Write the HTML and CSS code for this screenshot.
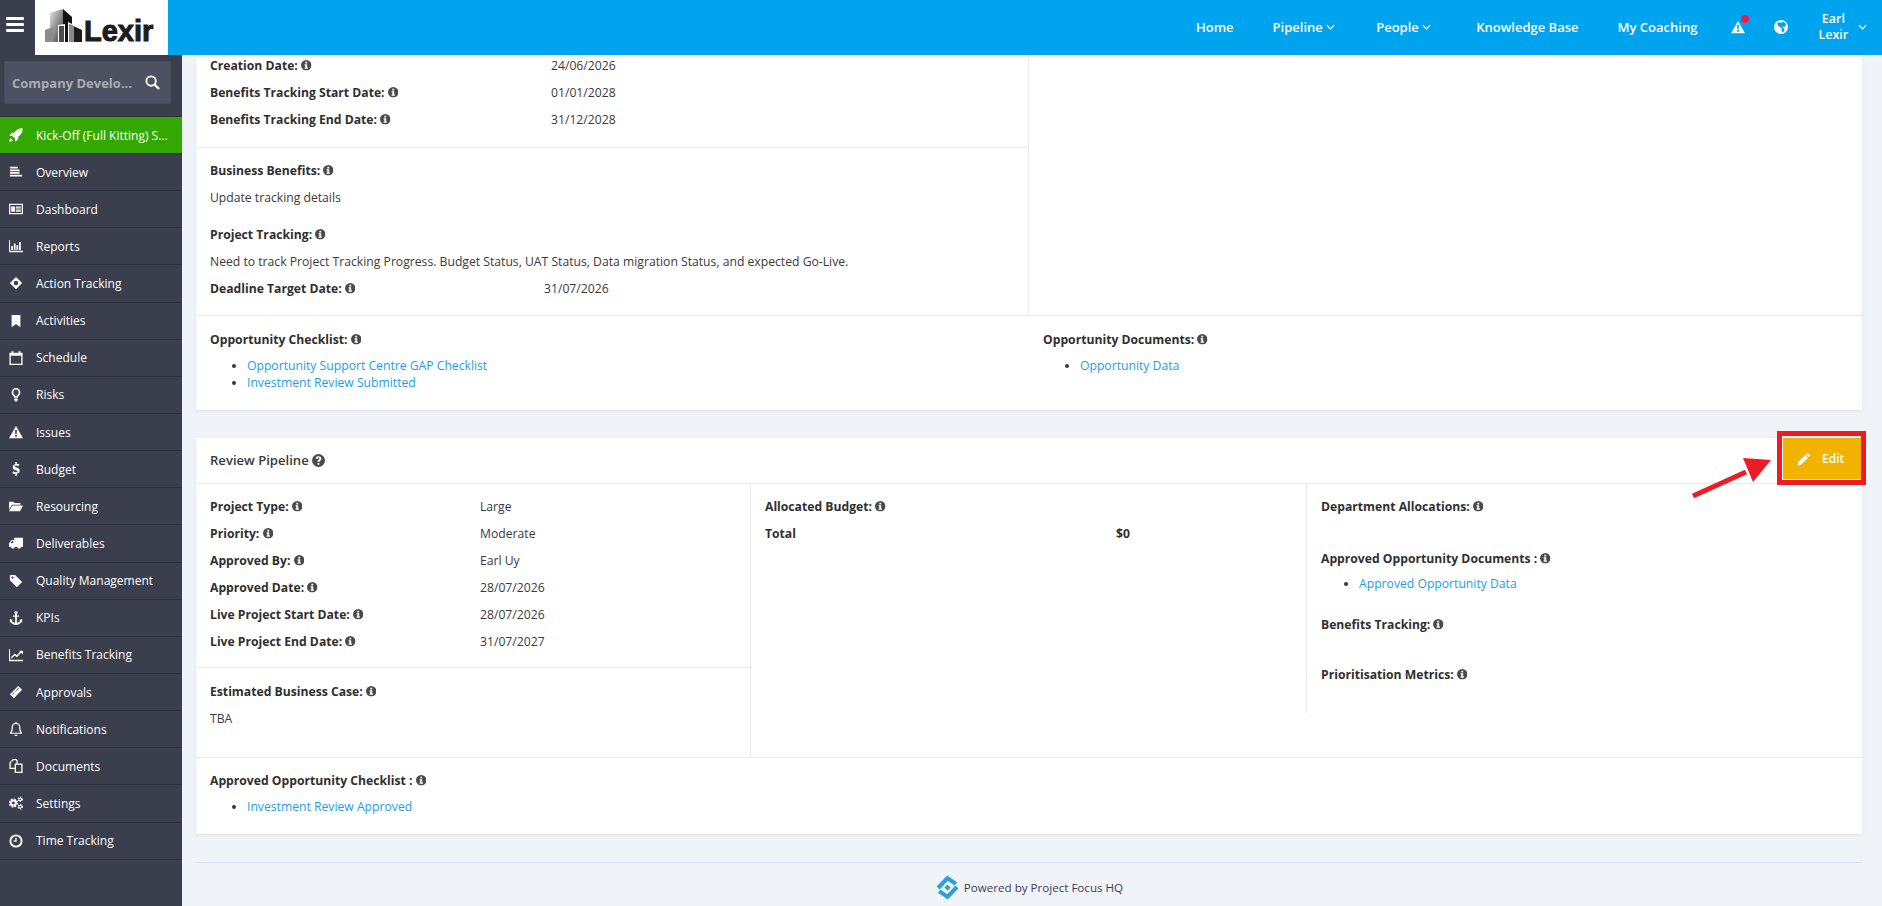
FILE: index.html
```html
<!DOCTYPE html>
<html lang="en">
<head>
  <meta charset="UTF-8" />
  <meta name="viewport" content="width=device-width, initial-scale=1.0" />
  <title>Review Pipeline - Lexir</title>
  <link rel="stylesheet" href="styles.css">
</head>
<body>

  <!-- Shared icons -->
  <svg class="sprite" xmlns="http://www.w3.org/2000/svg">
    <defs>
      <linearGradient id="tower" x1="0" y1="0" x2="1" y2="1"><stop offset="0" stop-color="#e4e4e4"/><stop offset="1" stop-color="#3c3c3c"/></linearGradient>
    </defs>
    <symbol id="i-info" viewBox="0 0 16 16"><path fill-rule="evenodd" d="M8 0a8 8 0 1 1 0 16A8 8 0 0 1 8 0zM6.600 2.600v2.600h2.800V2.600zM5.400 6.600v1.700h1.200v3.200H5.400v1.800h5.200v-1.800H9.400V6.600z"/></symbol>
    <symbol id="i-help" viewBox="0 0 16 16"><path fill-rule="evenodd" d="M8 0a8 8 0 1 1 0 16A8 8 0 0 1 8 0zM6.900 11v2.200h2.200V11zM8 2.800c-1.900 0-3.200 1-3.500 2.800l2.100.5c.1-.8.600-1.300 1.300-1.300.7 0 1.200.4 1.200 1 0 .5-.3.800-1 1.300-.9.600-1.200 1.200-1.200 2.200v.4h2.200c0-.6.100-.9.800-1.400 1-.7 1.500-1.400 1.500-2.600 0-2-1.600-3-3.400-2.900z"/></symbol>
    <symbol id="i-chevron" viewBox="0 0 10 6"><path d="M1 1l4 4 4-4" fill="none" stroke="currentColor" stroke-width="1.300"/></symbol>
    <symbol id="i-rocket" viewBox="0 0 16 16"><path d="M15.600.4C11.500.2 8.300 2 5.900 5.500H2.800L.4 8.800l3.200.2 3.400 3.400.2 3.200 3.300-2.400v-3.100C14 7.700 15.800 4.500 15.600.4zM1.700 11.500c-.8.800-1.300 2.300-1.300 4.100 1.800 0 3.300-.5 4.100-1.300z"/></symbol>
    <symbol id="i-overview" viewBox="0 0 16 16"><path d="M1 2h9v2H1zM1 5h11v2H1zM1 8h11v2H1zM1 11h14v2H1z"/></symbol>
    <symbol id="i-dashboard" viewBox="0 0 16 16"><path fill-rule="evenodd" d="M0 2h16v12H0zM1.500 3.500v9h13v-9zM2.500 5h4.500v6H2.500zM8 5h5.500v1.500H8zM8 7.300h5.500v1.400H8zM8 9.500h5.500V11H8z"/></symbol>
    <symbol id="i-reports" viewBox="0 0 16 16"><path d="M0 1.500h1.200v12H16V15H0zM2.500 8h2v4.500h-2zM5.500 5h2v7.500h-2zM8.500 7h2v5.500h-2zM11.500 3.500h2v9h-2z"/></symbol>
    <symbol id="i-action" viewBox="0 0 16 16"><path fill-rule="evenodd" d="M8 1l7 7-7 7-7-7zM8 5.500a2.500 2.500 0 1 0 0 5 2.500 2.500 0 0 0 0-5z"/></symbol>
    <symbol id="i-bookmark" viewBox="0 0 16 16"><path d="M3 1h10v14l-5-3.600L3 15z"/></symbol>
    <symbol id="i-calendar" viewBox="0 0 16 16"><path fill-rule="evenodd" d="M3 0h2v2h6V0h2v2h2.500v14H.5V2H3zM2 5.500V14.500h12V5.500z"/></symbol>
    <symbol id="i-bulb" viewBox="0 0 16 16"><path fill-rule="evenodd" d="M8 0a5 5 0 0 1 3.200 8.800c-.7.700-1 1.400-1.100 2.200H5.900c-.1-.8-.4-1.500-1.100-2.200A5 5 0 0 1 8 0zM8 1.800a3.200 3.200 0 0 0-2 5.600c.6.600 1.200 1.300 1.400 2h1.200c.2-.7.800-1.400 1.400-2a3.200 3.200 0 0 0-2-5.600zM6 12h4v1.500L9 15.500H7L6 13.500z"/></symbol>
    <symbol id="i-warning" viewBox="0 0 16 16"><path fill-rule="evenodd" d="M8 1l8 14H0zM7 5.500l.2 5h1.600l.2-5zM7 11.500v2h2v-2z"/></symbol>
    <symbol id="i-dollar" viewBox="0 0 16 16"><path d="M7.200 0h1.700v2c1.300.1 2.400.5 3.100 1l-.9 1.900c-.9-.6-1.900-.9-2.900-.9-1 0-1.500.4-1.500.9 0 .6.500.9 2.200 1.500 2.300.8 3.300 1.800 3.300 3.500s-1.200 3-3.200 3.300V16H7.300v-2.200c-1.400-.1-2.700-.6-3.500-1.300l1-1.900c1 .7 2.100 1.200 3.300 1.200 1 0 1.600-.4 1.600-1 0-.6-.5-1-2.100-1.500C5.400 8.600 4.200 7.700 4.200 5.900c0-1.700 1.200-3 3-3.400z"/></symbol>
    <symbol id="i-folder" viewBox="0 0 16 16"><path d="M0 3h5l1.500 1.500H13V6.500H3.500L0 12zM4 7.500h12L12.500 14H0z"/></symbol>
    <symbol id="i-truck" viewBox="0 0 16 16"><path fill-rule="evenodd" d="M6 2h10v10.500h-2.500a2 2 0 0 1-4 0h-3a2 2 0 0 1-4 0H0V8l3-3.500h3zM4.800 5.700H3.600L1.500 8h3.300z"/></symbol>
    <symbol id="i-tag" viewBox="0 0 16 16"><path fill-rule="evenodd" d="M1 1h6l8 8-6 6-8-8zM4 2.800a1.300 1.300 0 1 0 0 2.600 1.300 1.300 0 0 0 0-2.600z"/></symbol>
    <symbol id="i-anchor" viewBox="0 0 16 16"><path fill-rule="evenodd" d="M8 0a2 2 0 0 1 1 3.700V5h2.500v1.500H9v7c1.800-.2 3.200-1 4-2.300l-1.400-.8L15 9v4.500l-1-.9C12.700 14.800 10.600 16 8 16s-4.700-1.200-6-3.400l-1 .9V9l3.400 1.400-1.400.8c.8 1.300 2.200 2.100 4 2.300v-7H4.500V5H7V3.700A2 2 0 0 1 8 0zM8 1.300a.7.700 0 1 0 0 1.400.7.700 0 0 0 0-1.400z"/></symbol>
    <symbol id="i-chart" viewBox="0 0 16 16"><path d="M0 1.500h1.200v12H16V15H0z"/><path d="M2.500 11.500l4-4 2.500 2 5-5.500" fill="none" stroke="currentColor" stroke-width="1.700"/><path d="M11.500 3H16v4.500z"/></symbol>
    <symbol id="i-ticket" viewBox="0 0 16 16"><path fill-rule="evenodd" d="M10.500 1L15 5.500l-9.500 9.500L1 10.500zM10.500 3.400L7.900 6l.7.7 2.600-2.600zM7 6.900L6.300 7.600l.7.7.7-.7zM5.400 8.500L3.400 10.500l.7.7 2-2z"/></symbol>
    <symbol id="i-bell" viewBox="0 0 16 16"><path fill-rule="evenodd" d="M8 0a1 1 0 0 1 1 1.100c2.600.4 4 2.300 4 5 0 3 .7 4.700 2 6.400v1H1v-1c1.300-1.700 2-3.400 2-6.400 0-2.700 1.400-4.600 4-5A1 1 0 0 1 8 0zM8 2.400c-2.300 0-3.600 1.500-3.600 3.800 0 2.600-.5 4.500-1.400 6h10c-.9-1.500-1.400-3.400-1.400-6 0-2.300-1.300-3.800-3.600-3.800zM6.200 14.500h3.600a1.800 1.800 0 0 1-3.600 0z"/></symbol>
    <symbol id="i-docs" viewBox="0 0 16 16"><path fill-rule="evenodd" d="M4.500 0h4L10 1.500V5h5.500v11h-9v-4.500H.5V4zM5 1.500L2 4.600V10h4.500V5h2V2.200l-.7-.7zM8 6.500v8h6v-8z"/></symbol>
    <symbol id="i-cogs" viewBox="0 0 16 16">
      <circle cx="5" cy="8" r="2.800" fill="none" stroke="currentColor" stroke-width="2.200"/>
      <circle cx="5" cy="8" r="4.400" fill="none" stroke="currentColor" stroke-width="1.800" stroke-dasharray="2 1.460"/>
      <circle cx="12.800" cy="3.800" r="1.600" fill="none" stroke="currentColor" stroke-width="1.200"/>
      <circle cx="12.800" cy="3.800" r="2.500" fill="none" stroke="currentColor" stroke-width="1.200" stroke-dasharray="1.300 1.320"/>
      <circle cx="12.800" cy="12.200" r="1.600" fill="none" stroke="currentColor" stroke-width="1.200"/>
      <circle cx="12.800" cy="12.200" r="2.500" fill="none" stroke="currentColor" stroke-width="1.200" stroke-dasharray="1.300 1.320"/>
    </symbol>
    <symbol id="i-clock" viewBox="0 0 16 16"><path fill-rule="evenodd" d="M8 .5a7.500 7.500 0 1 1 0 15 7.500 7.500 0 0 1 0-15zM8 2.700a5.300 5.300 0 1 0 0 10.600A5.300 5.300 0 0 0 8 2.700zM7.200 4.200h1.600v4.600H5.200V7.300h2z"/></symbol>
    <symbol id="i-globe" viewBox="0 0 16 16"><path fill-rule="evenodd" d="M8 0a8 8 0 1 1 0 16A8 8 0 0 1 8 0zM3.500 3.500l1 3 3 2 1.500 1.500-.5 2 1.500 2 1.500-1 .5-2.500-3-3.500 2.500 1 2-1.500-.5-3-3-1.500-2.500 1.500-1-1z"/></symbol>
    <symbol id="i-pencil" viewBox="0 0 16 16"><path d="M12 .8L15.200 4l-1.700 1.700-3.200-3.200zM9.400 3.400l3.200 3.200-7.800 7.800L.6 15.400 1.600 11.200z"/></symbol>
  </svg>

  <!-- Top bar -->
  <header class="topbar">
    <div class="burger"><span></span><span></span><span></span></div>
    <div class="logo">
      <svg class="logo-mark" viewBox="0 0 37 37">
        <path d="M5 6L18 2v33H5z" fill="url(#tower)"/>
        <path d="M18 2l9 8v25h-9z" fill="#141414"/>
        <path d="M0 23l8-3v15H0z" fill="#8c8c8c"/>
        <path d="M13 18l7-1v18h-7z" fill="#fff"/>
        <path d="M14 19h5v16h-5z" fill="#4c4c4c"/>
        <path d="M23 15l14 7v13H23z" fill="#fff"/>
        <path d="M24 17l13 6v12H24z" fill="#1c1c1c"/>
        <path d="M24 17l5 2.400V35h-5z" fill="#8a8a8a"/>
      </svg>
      <span class="logo-text">Lexir</span>
    </div>
    <nav class="topnav">
      <a class="nav-home" href="#">Home</a>
      <a class="nav-pipeline" href="#">Pipeline <svg class="chev"><use href="#i-chevron"/></svg></a>
      <a class="nav-people" href="#">People <svg class="chev"><use href="#i-chevron"/></svg></a>
      <a class="nav-kb" href="#">Knowledge Base</a>
      <a class="nav-coach" href="#">My Coaching</a>
      <span class="alert"><svg class="nav-icon"><use href="#i-warning"/></svg><i class="dot"></i></span>
      <svg class="nav-icon nav-globe"><use href="#i-globe"/></svg>
      <span class="user">Earl<br>Lexir</span>
      <svg class="chev nav-user-chev"><use href="#i-chevron"/></svg>
    </nav>
  </header>

  <div class="layout">

    <!-- Sidebar -->
    <aside class="sidebar">
      <div class="search-wrap">
        <div class="search">
          <span>Company Develo...</span>
          <svg viewBox="0 0 16 16"><circle cx="6.500" cy="6.500" r="5" fill="none" stroke="#fff" stroke-width="2"/><path d="M10 10l5 5" stroke="#fff" stroke-width="2.400"/></svg>
        </div>
      </div>
      <ul class="side-menu">
        <li class="current"><svg><use href="#i-rocket"/></svg>Kick-Off (Full Kitting) S...</li>
        <li><svg><use href="#i-overview"/></svg>Overview</li>
        <li><svg><use href="#i-dashboard"/></svg>Dashboard</li>
        <li><svg><use href="#i-reports"/></svg>Reports</li>
        <li><svg><use href="#i-action"/></svg>Action Tracking</li>
        <li><svg><use href="#i-bookmark"/></svg>Activities</li>
        <li><svg><use href="#i-calendar"/></svg>Schedule</li>
        <li><svg><use href="#i-bulb"/></svg>Risks</li>
        <li><svg><use href="#i-warning"/></svg>Issues</li>
        <li><svg><use href="#i-dollar"/></svg>Budget</li>
        <li><svg><use href="#i-folder"/></svg>Resourcing</li>
        <li><svg><use href="#i-truck"/></svg>Deliverables</li>
        <li><svg><use href="#i-tag"/></svg>Quality Management</li>
        <li><svg><use href="#i-anchor"/></svg>KPIs</li>
        <li><svg><use href="#i-chart"/></svg>Benefits Tracking</li>
        <li><svg><use href="#i-ticket"/></svg>Approvals</li>
        <li><svg><use href="#i-bell"/></svg>Notifications</li>
        <li><svg><use href="#i-docs"/></svg>Documents</li>
        <li><svg><use href="#i-cogs"/></svg>Settings</li>
        <li><svg><use href="#i-clock"/></svg>Time Tracking</li>
      </ul>
    </aside>

    <main class="content">

      <!-- Opportunity card, scrolled part way -->
      <section class="card card-opportunity">
        <div class="split">
          <div class="split-left">
            <div class="block block-dates">
              <div class="field wide"><b>Creation Date: <svg class="info"><use href="#i-info"/></svg></b><span>24/06/2026</span></div>
              <div class="field wide"><b>Benefits Tracking Start Date: <svg class="info"><use href="#i-info"/></svg></b><span>01/01/2028</span></div>
              <div class="field wide"><b>Benefits Tracking End Date: <svg class="info"><use href="#i-info"/></svg></b><span>31/12/2028</span></div>
            </div>
            <div class="block block-benefits">
              <div class="field"><b>Business Benefits: <svg class="info"><use href="#i-info"/></svg></b></div>
              <div class="field gap-after">Update tracking details</div>
              <div class="field"><b>Project Tracking: <svg class="info"><use href="#i-info"/></svg></b></div>
              <div class="field">Need to track Project Tracking Progress. Budget Status, UAT Status, Data migration Status, and expected Go-Live.</div>
              <div class="field deadline"><b>Deadline Target Date: <svg class="info"><use href="#i-info"/></svg></b><span>31/07/2026</span></div>
            </div>
          </div>
          <div class="split-right"></div>
        </div>
        <div class="checklists">
          <div>
            <div class="field"><b>Opportunity Checklist: <svg class="info"><use href="#i-info"/></svg></b></div>
            <ul class="links">
              <li><a href="#">Opportunity Support Centre GAP Checklist</a></li>
              <li><a href="#">Investment Review Submitted</a></li>
            </ul>
          </div>
          <div>
            <div class="field"><b>Opportunity Documents: <svg class="info"><use href="#i-info"/></svg></b></div>
            <ul class="links">
              <li><a href="#">Opportunity Data</a></li>
            </ul>
          </div>
        </div>
      </section>

      <!-- Review Pipeline card -->
      <section class="card card-review">
        <div class="card-head">
          <h2>Review Pipeline <svg class="help"><use href="#i-help"/></svg></h2>
          <button class="edit-btn"><svg><use href="#i-pencil"/></svg>Edit</button>
        </div>

        <!-- Annotation drawn over the screenshot -->
        <div class="callout-box"></div>
        <svg class="callout-arrow" viewBox="0 0 90 45"><path d="M7 41L60 17" stroke="#ed1c24" stroke-width="5"/><path d="M85 5L57 3l10 24z" fill="#ed1c24"/></svg>

        <div class="review-cols">
          <div class="col-one">
            <div class="block block-review">
              <div class="field"><b>Project Type: <svg class="info"><use href="#i-info"/></svg></b><span>Large</span></div>
              <div class="field"><b>Priority: <svg class="info"><use href="#i-info"/></svg></b><span>Moderate</span></div>
              <div class="field"><b>Approved By: <svg class="info"><use href="#i-info"/></svg></b><span>Earl Uy</span></div>
              <div class="field"><b>Approved Date: <svg class="info"><use href="#i-info"/></svg></b><span>28/07/2026</span></div>
              <div class="field"><b>Live Project Start Date: <svg class="info"><use href="#i-info"/></svg></b><span>28/07/2026</span></div>
              <div class="field"><b>Live Project End Date: <svg class="info"><use href="#i-info"/></svg></b><span>31/07/2027</span></div>
            </div>
            <div class="block block-case">
              <div class="field"><b>Estimated Business Case: <svg class="info"><use href="#i-info"/></svg></b></div>
              <div class="field">TBA</div>
            </div>
          </div>
          <div class="col-two">
            <div class="field"><b>Allocated Budget: <svg class="info"><use href="#i-info"/></svg></b></div>
            <div class="field total"><b>Total</b><b>$0</b></div>
          </div>
          <div class="col-three">
            <div class="field dept"><b>Department Allocations: <svg class="info"><use href="#i-info"/></svg></b></div>
            <div class="field"><b>Approved Opportunity Documents : <svg class="info"><use href="#i-info"/></svg></b></div>
            <ul class="links links-tight">
              <li><a href="#">Approved Opportunity Data</a></li>
            </ul>
            <div class="field tracking"><b>Benefits Tracking: <svg class="info"><use href="#i-info"/></svg></b></div>
            <div class="field"><b>Prioritisation Metrics: <svg class="info"><use href="#i-info"/></svg></b></div>
          </div>
        </div>

        <div class="approved-list">
          <div class="field"><b>Approved Opportunity Checklist : <svg class="info"><use href="#i-info"/></svg></b></div>
          <ul class="links">
            <li><a href="#">Investment Review Approved</a></li>
          </ul>
        </div>
      </section>

      <footer class="page-footer">
        <svg viewBox="0 0 24 24"><path d="M3 12.500L12 3l8 5.500M21 11.500L12 21l-8-5.500" fill="none" stroke="#2f9fdb" stroke-width="4"/><path d="M12 9l3 3-3 3-3-3z" fill="#2f9fdb"/></svg>
        Powered by Project Focus HQ
      </footer>
    </main>
  </div>

</body>
</html>
```
FILE: styles.css
```css
/* Basic Reset */
* {
  margin: 0;
  padding: 0;
  box-sizing: border-box;
}

body {
  font-family: "Open Sans", Arial, sans-serif;
  font-size: 12.18px;
  color: #3a3a3a;
  background-color: #f0f3f7;
  height: 906px;
  overflow: hidden;
}

.sprite {
  position: absolute;
  width: 0;
  height: 0;
}

a {
  color: #1b9ee8;
  text-decoration: none;
}

/* Top bar */
.topbar {
  height: 55px;
  display: flex;
  background-color: #00a3ee;
}

.burger {
  width: 35px;
  background-color: #3a3e4d;
  padding: 17px 11px 0 6px;
}

.burger span {
  display: block;
  height: 3px;
  margin-bottom: 3px;
  background-color: #fff;
  border-radius: 1px;
}

.logo {
  width: 133px;
  background-color: #fff;
  display: flex;
  align-items: flex-start;
  padding: 7px 0 0 10px;
}

.logo-mark {
  width: 37px;
  height: 37px;
  flex-shrink: 0;
}

.logo-text {
  font-family: "Liberation Sans", Arial, sans-serif;
  font-weight: 700;
  font-size: 29px;
  line-height: 30px;
  -webkit-text-stroke: 1px #1c1c1c;
  color: #1c1c1c;
  margin: 9px 0 0 2px;
}

.topnav {
  flex: 1;
  display: flex;
  align-items: center;
  padding-bottom: 2px;
  color: #fff;
  font-size: 13px;
  font-weight: 600;
}

.topnav a {
  color: #fff;
}

.nav-home { margin-left: 1028px; }
.nav-pipeline { margin-left: 39px; }
.nav-people { margin-left: 41px; }
.nav-kb { margin-left: 45px; }
.nav-coach { margin-left: 39px; }

.chev {
  width: 9px;
  height: 6px;
  color: #fff;
  vertical-align: 2px;
}

.alert {
  position: relative;
  margin-left: 34px;
  height: 14px;
}

.nav-icon {
  display: block;
  width: 14px;
  height: 14px;
  fill: #fff;
}

.dot {
  position: absolute;
  top: -5px;
  right: -4px;
  width: 8px;
  height: 8px;
  border-radius: 50%;
  background-color: #f5174d;
}

.nav-globe { margin-left: 29px; }

.user {
  margin-left: 25px;
  width: 40px;
  text-align: center;
  line-height: 16px;
  font-size: 12.5px;
}

.nav-user-chev { margin-left: 5px; }

/* Layout */
.layout {
  display: flex;
  height: 851px;
}

/* Sidebar */
.sidebar {
  width: 182px;
  flex-shrink: 0;
  background-color: #3a3e4d;
}

.search-wrap {
  height: 62px;
  padding: 6px 11px 0 4px;
  border-bottom: 1px solid #2e3140;
}

.search {
  height: 43px;
  display: flex;
  align-items: center;
  justify-content: space-between;
  padding: 0 10px 0 7px;
  background-color: #4d5162;
  border: 1px solid #474b5b;
  color: #a9acb6;
  font-size: 13px;
  font-weight: 700;
}

.search svg {
  width: 15px;
  height: 15px;
}

.side-menu {
  list-style-type: none;
}

.side-menu li {
  height: 37.15px;
  display: flex;
  align-items: center;
  color: #fff;
  font-size: 12px;
  border-bottom: 1px solid #2e3140;
}

.side-menu li svg {
  width: 14px;
  height: 14px;
  margin: 0 13px 0 9px;
  fill: #fff;
  color: #fff;
  flex-shrink: 0;
}

.side-menu li.current {
  height: 37px;
  background-color: #33a800;
}

/* Main content */
.content {
  flex: 1;
  padding: 0 20px 0 14px;
}

.card {
  position: relative;
  background-color: #fff;
  box-shadow: 0 1px 3px rgba(0, 0, 0, 0.08);
}

.card-opportunity {
  height: 355px;
  margin-bottom: 28px;
}

.card-review {
  height: 396px;
}

.split {
  display: flex;
  height: 261px;
  border-bottom: 1px solid #e8eaed;
}

.split-left {
  width: 833px;
  border-right: 1px solid #e8eaed;
}

.block {
  padding-left: 14px;
}

.block-dates {
  height: 93px;
  border-bottom: 1px solid #e8eaed;
}

.block-benefits {
  padding-top: 12px;
}

.field {
  display: flex;
  align-items: center;
  height: 20px;
  margin-bottom: 7px;
  white-space: nowrap;
}

.field b {
  font-weight: 700;
  color: #2f2f2f;
}

.field.wide b {
  width: 341px;
}

.gap-after {
  margin-bottom: 17px;
}

.deadline b {
  width: 334px;
}

.info {
  width: 10.5px;
  height: 10.5px;
  fill: #4a4a4a;
  vertical-align: -1px;
}

/* Checklists */
.checklists {
  display: grid;
  grid-template-columns: 833px 1fr;
  padding: 13px 14px 0;
}

.links {
  margin-top: 8px;
  padding-left: 37px;
  line-height: 17px;
}

.links-tight {
  margin-top: 0;
  padding-left: 38px;
}

/* Review Pipeline */
.card-head {
  height: 46px;
  display: flex;
  justify-content: space-between;
  padding-left: 14px;
  border-bottom: 1px solid #e8eaed;
}

.card-head h2 {
  font-size: 13.1px;
  font-weight: 600;
  line-height: 45px;
  color: #3a3a3a;
}

.help {
  width: 13px;
  height: 13px;
  fill: #4a4a4a;
  vertical-align: -2px;
}

.edit-btn {
  width: 79px;
  height: 41px;
  border: none;
  display: flex;
  align-items: center;
  padding-left: 14px;
  background-color: #f2b300;
  color: #fff;
  font-family: inherit;
  font-size: 12px;
  font-weight: 600;
}

.edit-btn svg {
  width: 14px;
  height: 14px;
  margin-right: 11px;
  fill: #fff;
}

.callout-box {
  position: absolute;
  top: -7px;
  right: -4px;
  width: 89px;
  height: 54px;
  border: 5px solid #ed1c24;
}

.callout-arrow {
  position: absolute;
  top: 17px;
  right: 86px;
  width: 90px;
  height: 45px;
}

.review-cols {
  display: grid;
  grid-template-columns: 555px 555px 1fr;
  height: 274px;
  border-bottom: 1px solid #e8eaed;
}

.col-one {
  border-right: 1px solid #e8eaed;
}

.block-review {
  height: 184px;
  padding-top: 12px;
  border-bottom: 1px solid #e8eaed;
}

.block-review .field b {
  width: 270px;
}

.block-case {
  padding-top: 13px;
}

.col-two {
  padding: 12px 14px 0;
}

.total b:first-child {
  width: 351px;
}

.col-three {
  align-self: start;
  height: 230px;
  padding: 12px 0 0 14px;
  border-left: 1px solid #e8eaed;
}

.dept {
  margin-bottom: 32px;
}

.tracking {
  margin: 22px 0 30px;
}

.approved-list {
  padding: 12px 14px 0;
}

/* Footer */
.page-footer {
  margin-top: 28px;
  height: 44px;
  padding-top: 5px;
  display: flex;
  align-items: center;
  justify-content: center;
  gap: 4px;
  font-size: 11.6px;
  color: #3a3f52;
  border-top: 1px solid #d9e2ee;
}

.page-footer svg {
  width: 25px;
  height: 25px;
}
```
